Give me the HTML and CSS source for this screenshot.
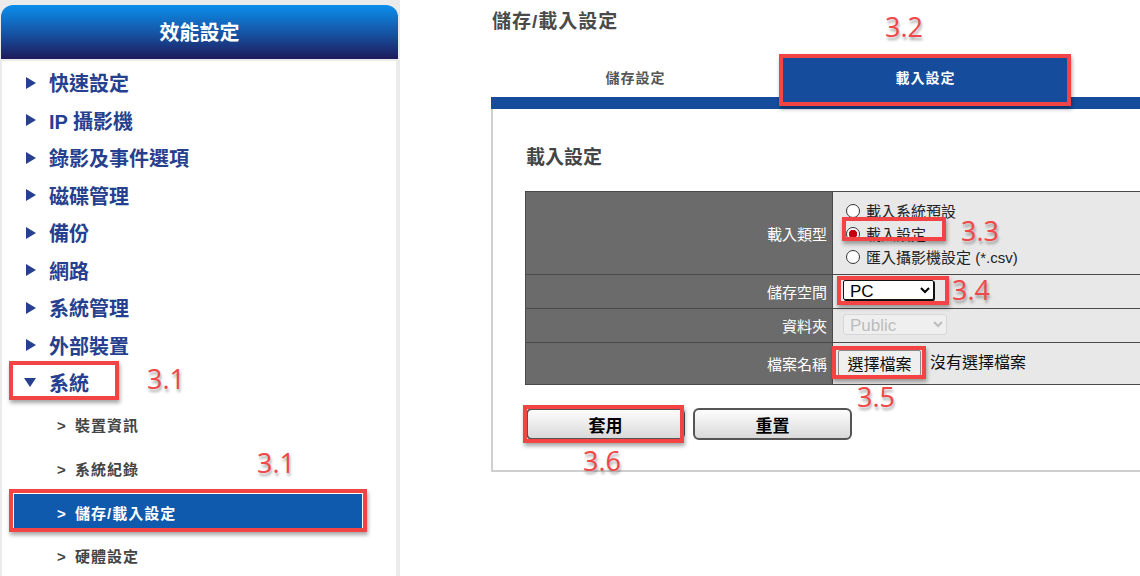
FILE: index.html
```html
<!DOCTYPE html>
<html lang="zh-Hant">
<head>
    <meta charset="UTF-8">
    <meta name="viewport" content="width=device-width, initial-scale=1.0">
    <title>儲存/載入設定</title>
    <link rel="stylesheet" href="styles.css">
</head>
<body>
    <div class="page">
        <aside class="sidebar">
            <div class="side-head">效能設定</div>
            <ul class="menu">
                <li class="menu-item"><span class="arrow"></span>快速設定</li>
                <li class="menu-item"><span class="arrow"></span>IP 攝影機</li>
                <li class="menu-item"><span class="arrow"></span>錄影及事件選項</li>
                <li class="menu-item"><span class="arrow"></span>磁碟管理</li>
                <li class="menu-item"><span class="arrow"></span>備份</li>
                <li class="menu-item"><span class="arrow"></span>網路</li>
                <li class="menu-item"><span class="arrow"></span>系統管理</li>
                <li class="menu-item"><span class="arrow"></span>外部裝置</li>
                <li class="menu-item open boxed box-system"><span class="arrow down"></span>系統</li>
                <li class="sub-item"><span class="gt">&gt;</span>裝置資訊</li>
                <li class="sub-item"><span class="gt">&gt;</span>系統紀錄</li>
                <li class="sub-item active boxed box-sub"><span class="gt">&gt;</span>儲存/載入設定</li>
                <li class="sub-item"><span class="gt">&gt;</span>硬體設定</li>
            </ul>
            <!-- step marks drawn over the menu -->
            <span class="note" style="left: 147px; top: 366px;">3.1</span>
            <span class="note" style="left: 257px; top: 450px;">3.1</span>
        </aside>

        <main class="content">
            <h1 class="page-title">儲存/載入設定</h1>
            <div class="tabs">
                <div class="tab">儲存設定</div>
                <div class="tab active boxed box-tab">載入設定</div>
            </div>
            <div class="tab-bar"></div>

            <section class="panel">
                <h2 class="panel-title">載入設定</h2>
                <div class="form-table">
                    <div class="row row-type">
                        <div class="label">載入類型</div>
                        <div class="value radios">
                            <label class="radio-line"><input type="radio" name="loadType" class="radio">載入系統預設</label>
                            <label class="radio-line boxed box-radio"><input type="radio" name="loadType" class="radio" checked>載入設定</label>
                            <label class="radio-line"><input type="radio" name="loadType" class="radio">匯入攝影機設定 (*.csv)</label>
                        </div>
                    </div>
                    <div class="row row-small">
                        <div class="label">儲存空間</div>
                        <div class="value top">
                            <span class="boxed box-pc">
                                <select class="select-pc">
                                    <option>PC</option>
                                    <option>USB</option>
                                </select>
                            </span>
                        </div>
                    </div>
                    <div class="row row-small">
                        <div class="label">資料夾</div>
                        <div class="value top">
                            <select class="select-off" disabled>
                                <option>Public</option>
                            </select>
                        </div>
                    </div>
                    <div class="row row-file">
                        <div class="label">檔案名稱</div>
                        <div class="value top">
                            <button type="button" class="file-btn boxed box-file">選擇檔案</button>
                            <span class="file-name">沒有選擇檔案</span>
                        </div>
                    </div>
                </div>

                <div class="actions">
                    <button type="button" class="act-btn boxed box-apply">套用</button>
                    <button type="button" class="act-btn">重置</button>
                </div>
            </section>

            <span class="note" style="left: 394px; top: 14px;">3.2</span>
            <span class="note" style="left: 470px; top: 218px;">3.3</span>
            <span class="note" style="left: 461px; top: 277px;">3.4</span>
            <span class="note" style="left: 366px; top: 384px;">3.5</span>
            <span class="note" style="left: 92px; top: 448px;">3.6</span>
        </main>
    </div>
</body>
</html>
```

FILE: styles.css
```css
html {
    overflow: hidden;
}
body {
    margin: 0;
    background: #fff;
    font-family: "Liberation Sans", "Noto Sans CJK TC", sans-serif;
    color: #222;
}
.page {
    display: flex;
    gap: 91px;
    height: 576px;
}

/* sidebar */
.sidebar {
    position: relative;
    flex: none;
    width: 400px;
    box-sizing: border-box;
    padding: 5px 2px 0 1px;
    background: #ebebeb;
    display: flex;
    flex-direction: column;
}
.side-head {
    height: 54px;
    border-radius: 12px 12px 0 0;
    background: linear-gradient(#0a8feb, #1656a8 50%, #1e1a5a);
    color: #fff;
    font-size: 20px;
    font-weight: bold;
    display: flex;
    align-items: center;
    justify-content: center;
}
.menu {
    flex: 1;
    display: flex;
    flex-direction: column;
    list-style: none;
    margin: 2px 2px 0 1px;
    padding: 3px 0 0;
    background: #fff;
}
.menu-item {
    position: relative;
    flex: none;
    height: 37.5px;
    display: flex;
    align-items: center;
    padding-left: 24px;
    font-size: 20px;
    font-weight: bold;
    color: #26408f;
}
.arrow {
    width: 0;
    height: 0;
    border-left: 10px solid #26408f;
    border-top: 6px solid transparent;
    border-bottom: 6px solid transparent;
    margin-right: 13px;
}
.arrow.down {
    border-top: 9px solid #26408f;
    border-left: 6px solid transparent;
    border-right: 6px solid transparent;
    border-bottom: 0;
    margin-left: -2px;
    margin-right: 13px;
}
.sub-item {
    position: relative;
    flex: none;
    box-sizing: border-box;
    width: 348px;
    height: 34px;
    margin: 5px 0 4.7px 12px;
    padding: 5px 0 0 43px;
    line-height: 29px;
    font-size: 15px;
    font-weight: bold;
    letter-spacing: 1px;
    color: #444;
}
.sub-item .gt {
    display: inline-block;
    width: 18px;
    letter-spacing: 0;
}
.sub-item.active {
    background: #0f5aad;
    color: #fff;
}

/* main area */
.content {
    position: relative;
    flex: none;
    width: 649px;
}
.page-title {
    margin: 0;
    padding: 11px 0 0 1px;
    font-size: 19px;
    line-height: 22px;
    letter-spacing: 1px;
    color: #4a4a4a;
}
.tabs {
    display: flex;
    gap: 2px;
    margin-top: 23px;
    height: 41px;
}
.tab {
    position: relative;
    width: 289px;
    display: flex;
    align-items: center;
    justify-content: center;
    font-size: 14px;
    font-weight: bold;
    letter-spacing: 1px;
    color: #555;
}
.tab.active {
    width: 287px;
    background: #154c9c;
    color: #fff;
}
.tab-bar {
    height: 12px;
    background: #154c9c;
}
.panel {
    border-left: 2px solid #cfcfcf;
    border-bottom: 2px solid #cfcfcf;
    padding: 37px 0 30px 32px;
}
.panel-title {
    margin: 0 0 21px;
    padding-left: 1px;
    font-size: 19px;
    line-height: 24px;
    color: #444;
}

/* form table */
.form-table {
    border-left: 1px solid #4a4a4a;
    border-bottom: 1px solid #4a4a4a;
}
.row {
    display: grid;
    grid-template-columns: 306px 1fr;
    border-top: 1px solid #4a4a4a;
}
.row-type {
    height: 82px;
}
.row-small {
    height: 33px;
}
.row-file {
    height: 41px;
}
.label {
    background: #6b6b6b;
    color: #fff;
    font-size: 15px;
    display: flex;
    align-items: center;
    justify-content: flex-end;
    padding-right: 5px;
}
.value {
    background: #e8e8e8;
    border-left: 1px solid #4a4a4a;
    padding-left: 10px;
    display: flex;
    align-items: center;
    font-size: 16px;
}
.value.top {
    align-items: flex-start;
    padding-top: 5px;
}
.row-file .value.top {
    padding-top: 7px;
}
.radios {
    flex-direction: column;
    align-items: flex-start;
    padding-top: 7px;
}
.radio-line {
    position: relative;
    display: flex;
    align-items: center;
    height: 23px;
    margin-left: 3px;
    font-size: 15px;
    color: #222;
}
.radio {
    appearance: none;
    width: 14px;
    height: 14px;
    margin: 0 6px 0 0;
    border: 1px solid #333;
    border-radius: 50%;
    background: #fff;
}
.radio:checked {
    background: radial-gradient(circle, #c40010 0 4px, #fff 4.5px);
}
.select-pc {
    width: 91px;
    height: 20px;
    padding: 0 2px;
    font-family: "Liberation Sans", sans-serif;
    font-size: 17px;
    color: #000;
    background: #fff;
    border: 1px solid #111;
    border-radius: 2px;
    box-shadow: 1px 1px 0 #111;
}
.select-off {
    width: 104px;
    height: 21px;
    padding: 0 2px;
    font-family: "Liberation Sans", sans-serif;
    font-size: 17px;
    color: #aaa;
    background: #f3f3f3;
    border: 1px solid #d0d0d0;
    border-radius: 3px;
}
.boxed {
    position: relative;
}
.box-pc {
    display: inline-block;
    line-height: 0;
}
.file-btn {
    width: 83px;
    height: 26px;
    margin-left: -5px;
    padding: 0;
    font-family: "Noto Sans CJK TC", sans-serif;
    font-size: 16px;
    color: #111;
    background: #efefef;
    border: 1px solid #8a8a8a;
    border-radius: 2px;
}
.file-name {
    margin-left: 9px;
    line-height: 26px;
    color: #111;
}
.actions {
    display: flex;
    gap: 8px;
    margin-top: 23px;
    padding-left: 1px;
}
.act-btn {
    width: 159px;
    height: 32px;
    font-family: "Noto Sans CJK TC", sans-serif;
    font-size: 17px;
    font-weight: bold;
    color: #000;
    background: linear-gradient(#fdfdfd, #d9d9d9);
    border: 2px solid #555;
    border-radius: 6px;
}

/* red step frames */
.boxed::after {
    content: "";
    position: absolute;
    border: 4px solid #f24444;
    box-shadow: 1px 3px 4px rgba(0, 0, 0, 0.35);
    pointer-events: none;
}
.box-system::after {
    left: 7px;
    width: 102px;
    top: -3px;
    bottom: 1px;
}
.box-sub::after {
    left: -5px;
    right: -5px;
    top: -5px;
    bottom: -4px;
}
.box-tab::after {
    left: -3px;
    right: -2px;
    top: -2px;
    bottom: -9px;
}
.box-radio::after {
    left: -4px;
    width: 96px;
    top: -5px;
    height: 16px;
}
.box-pc::after {
    left: -6px;
    right: -15px;
    top: -4px;
    bottom: -5px;
}
.box-file::after {
    left: -7px;
    right: -6px;
    top: -5px;
    bottom: -4px;
}
.box-apply::after {
    left: -5px;
    right: -1px;
    top: -5px;
    bottom: -5px;
}
.note {
    position: absolute;
    font-family: "Open Sans", sans-serif;
    font-size: 27px;
    line-height: 26px;
    color: #f04848;
    text-shadow: 1px 3px 3px rgba(0, 0, 0, 0.35);
}
```
